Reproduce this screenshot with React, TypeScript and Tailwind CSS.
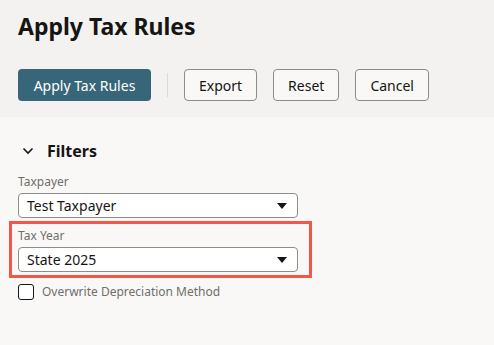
import React from "react";

const Caret = () => (
  <svg width="10" height="6" viewBox="0 0 10 6" className="shrink-0">
    <path d="M0 0h10L5 6z" fill="#161513" />
  </svg>
);

interface SelectProps {
  label: string;
  value: string;
}

const SelectField = ({ label, value }: SelectProps) => (
  <div className="flex flex-col">
    <span className="text-[12px] leading-[16px] text-[#6f6e6a]">{label}</span>
    <div className="mt-[3px] w-[280px] h-[25px] flex items-center justify-between pl-[8px] pr-[10px] bg-white border border-[#8d8c89] rounded-[4px]">
      <span className="text-[14px] text-[#161513]">{value}</span>
      <Caret />
    </div>
  </div>
);

const App = () => {
  return (
    <div
      className="w-[494px] h-[345px] flex flex-col bg-[#f9f8f6] text-[#161513]"
      style={{ fontFamily: '"Noto Sans", "Open Sans", sans-serif' }}
    >
      <div className="h-[117px] shrink-0 bg-[#f3f2f0] px-[18px] pt-[10px]">
        <h1 className="text-[23px] leading-[32px] font-bold">Apply Tax Rules</h1>
        <div className="mt-[27px] flex items-center">
          <button className="h-[32px] w-[133px] rounded-[4px] bg-[#376678] text-white text-[14px]">
            Apply Tax Rules
          </button>
          <div className="mx-[16px] w-px h-[24px] bg-[#dcdad6]" />
          <div className="flex gap-[16px]">
            {["Export", "Reset", "Cancel"].map((b) => (
              <button
                key={b}
                className="h-[32px] px-[14px] rounded-[4px] border border-[#8d8c89] bg-[#f9f8f6] text-[14px]"
              >
                {b}
              </button>
            ))}
          </div>
        </div>
      </div>
      <div className="px-[18px] pt-[24px] flex flex-col">
        <div className="flex items-center h-[20px]">
          <svg width="12" height="8" viewBox="0 0 12 8" className="ml-[4px]">
            <path d="M1.5 1.5L6 6l4.5-4.5" fill="none" stroke="#161513" strokeWidth="1.6" />
          </svg>
          <span className="ml-[13px] text-[16px] font-bold">Filters</span>
        </div>
        <div className="mt-[13px]">
          <SelectField label="Taxpayer" value="Test Taxpayer" />
        </div>
        <div className="mt-[3px] -mx-[9px] w-[303px] border-[3px] border-[#f4574a] px-[6px] pt-[4px] pb-[3px]">
          <SelectField label="Tax Year" value="State 2025" />
        </div>
        <label className="mt-[5px] flex items-center gap-[8px]">
          <span className="w-[16px] h-[16px] rounded-[3px] border border-[#161513] bg-white" />
          <span className="text-[12px] text-[#6f6e6a]">Overwrite Depreciation Method</span>
        </label>
      </div>
    </div>
  );
};

export default App;
